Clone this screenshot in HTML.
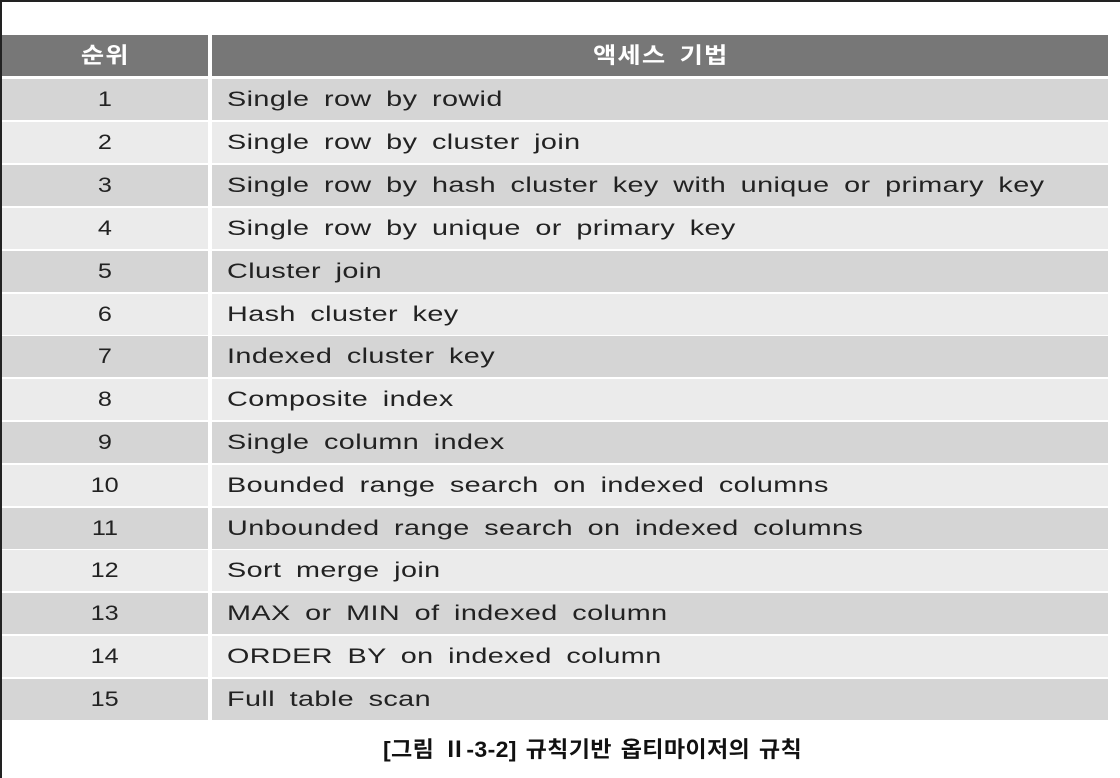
<!DOCTYPE html>
<html><head><meta charset="utf-8"><style>
html,body{margin:0;padding:0;background:#fff;}
body{width:1120px;height:778px;position:relative;overflow:hidden;border-left:2px solid #222;border-top:2px solid #222;box-sizing:border-box;font-family:"Liberation Sans","Noto Sans CJK KR",sans-serif;}
.row{position:absolute;left:0;width:1106px;height:41px;}
.c1{position:absolute;left:0;width:206px;height:100%;text-align:center;line-height:42px;font-size:21px;color:#222;}
.c1 span{display:inline-block;transform:scaleX(1.2);}
.c2{position:absolute;left:210px;width:896px;height:100%;line-height:42px;font-size:21px;color:#222;}
.c2 span{display:inline-block;margin-left:15px;transform:scaleX(1.37);transform-origin:left center;letter-spacing:0.3px;word-spacing:4.5px;white-space:nowrap;}
.h .c1,.h .c2{background:#777;color:#fff;font-weight:bold;text-align:center;font-size:22px;}
.h span{display:inline-block;transform:scaleX(1.15);letter-spacing:1px;}
.o .c1,.o .c2{background:#d5d5d5;}
.e .c1,.e .c2{background:#ebebeb;}
.cap{position:absolute;top:730px;left:64px;width:1054px;text-align:center;font-size:22px;font-weight:bold;color:#111;}
.cap span{display:inline-block;transform:scaleX(1.05);letter-spacing:0.3px;word-spacing:2px;}
</style></head><body>
<div class="row h" style="top:33px"><div class="c1"><span>순위</span></div><div class="c2"><span style="margin-left:-16px">액세스 기법</span></div></div>
<div class="row o" style="top:77px"><div class="c1"><span>1</span></div><div class="c2"><span>Single row by rowid</span></div></div>
<div class="row e" style="top:120px"><div class="c1"><span>2</span></div><div class="c2"><span>Single row by cluster join</span></div></div>
<div class="row o" style="top:163px"><div class="c1"><span>3</span></div><div class="c2"><span>Single row by hash cluster key with unique or primary key</span></div></div>
<div class="row e" style="top:206px"><div class="c1"><span>4</span></div><div class="c2"><span>Single row by unique or primary key</span></div></div>
<div class="row o" style="top:249px"><div class="c1"><span>5</span></div><div class="c2"><span>Cluster join</span></div></div>
<div class="row e" style="top:292px"><div class="c1"><span>6</span></div><div class="c2"><span>Hash cluster key</span></div></div>
<div class="row o" style="top:334px"><div class="c1"><span>7</span></div><div class="c2"><span>Indexed cluster key</span></div></div>
<div class="row e" style="top:377px"><div class="c1"><span>8</span></div><div class="c2"><span>Composite index</span></div></div>
<div class="row o" style="top:420px"><div class="c1"><span>9</span></div><div class="c2"><span>Single column index</span></div></div>
<div class="row e" style="top:463px"><div class="c1"><span>10</span></div><div class="c2"><span>Bounded range search on indexed columns</span></div></div>
<div class="row o" style="top:506px"><div class="c1"><span>11</span></div><div class="c2"><span>Unbounded range search on indexed columns</span></div></div>
<div class="row e" style="top:548px"><div class="c1"><span>12</span></div><div class="c2"><span>Sort merge join</span></div></div>
<div class="row o" style="top:591px"><div class="c1"><span>13</span></div><div class="c2"><span>MAX or MIN of indexed column</span></div></div>
<div class="row e" style="top:634px"><div class="c1"><span>14</span></div><div class="c2"><span>ORDER BY on indexed column</span></div></div>
<div class="row o" style="top:677px"><div class="c1"><span>15</span></div><div class="c2"><span>Full table scan</span></div></div>
<div class="cap"><span>[그림 Ⅱ-3-2] 규칙기반 옵티마이저의 규칙</span></div>
</body></html>
